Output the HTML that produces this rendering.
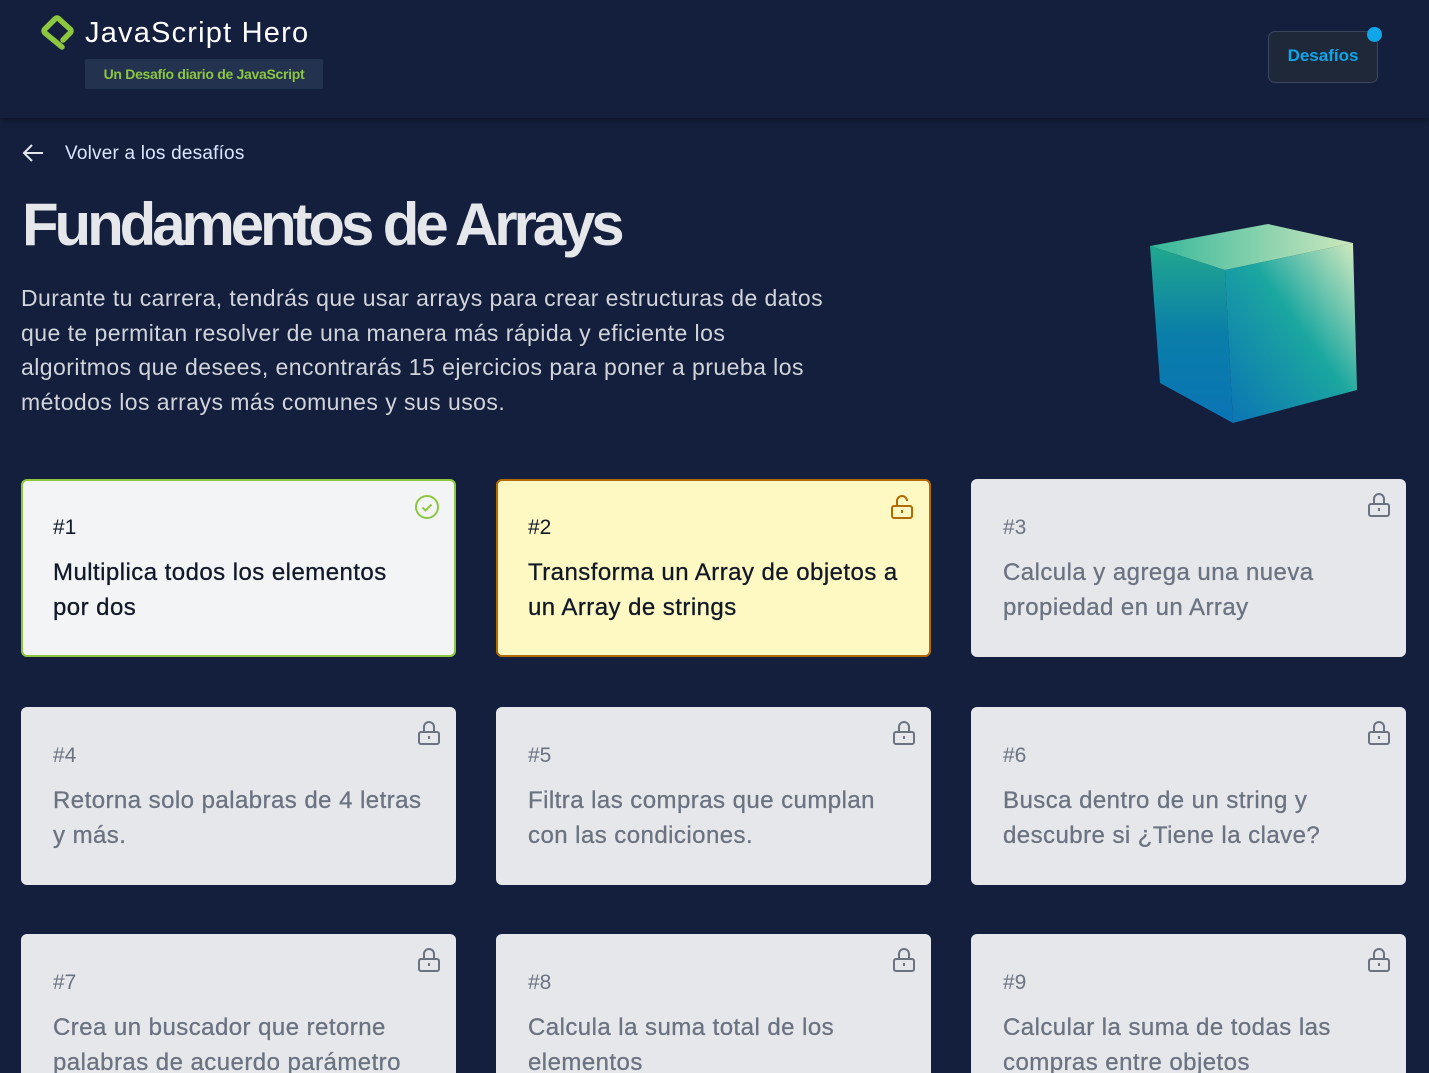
<!DOCTYPE html>
<html style="width:1429px;height:1073px;overflow:hidden"><head><meta charset="utf-8"><style>
*{box-sizing:border-box;margin:0;padding:0}
body{width:1429px;height:1073px;overflow:hidden;background:#131f3d;font-family:"Liberation Sans",sans-serif;position:relative}
.hdr{position:absolute;left:0;top:0;width:1429px;height:118px;background:#131f3c;box-shadow:0 2px 6px rgba(0,0,0,.35)}
.logo{position:absolute;left:85px;top:17px;color:#fff;font-size:29px;letter-spacing:1.2px}
.sub{position:absolute;left:85px;top:59px;width:238px;height:30px;background:#22324f;border-radius:2px;color:#8dc63f;font-weight:bold;font-size:14px;line-height:30px;text-align:center;letter-spacing:-.3px}
.btn{position:absolute;left:1268px;top:31px;width:110px;height:52px;border:1px solid #3b4660;border-radius:7px;background:#1e2838;color:#0ea5e9;font-weight:bold;font-size:17px;text-align:center;line-height:48px}
.dot{position:absolute;left:1367px;top:27px;width:15px;height:15px;border-radius:50%;background:#0ea5e9}
.back{position:absolute;left:65px;top:143px;color:#dbe6ff;font-size:19px;letter-spacing:.2px}
h1{position:absolute;left:22px;top:190px;color:#e5e7eb;font-size:60px;font-weight:bold;letter-spacing:-4.1px}
.desc{position:absolute;left:21px;top:281px;width:820px;color:#d1d5db;font-size:23px;line-height:34.5px;letter-spacing:.45px}
.card{position:absolute;width:435px;height:178px;border-radius:6px;background:#e5e7eb;color:#6b7280;padding:37px 32px 0 32px;overflow:hidden}
.card .n{font-size:21px}
.card .t{font-size:24px;line-height:34.5px;margin-top:16px;letter-spacing:.45px;-webkit-text-stroke:.3px currentColor}
.card svg{position:absolute;right:14px;top:13px}
.c1{background:#f3f4f6;border:2px solid #8dc63f;color:#111827;padding:35px 30px 0 30px}
.c2{background:#fef9c3;border:2px solid #b46a00;color:#111827;padding:35px 30px 0 30px}
</style></head><body>
<div class="hdr"></div>
<svg style="position:absolute;left:38px;top:14px" width="40" height="40" viewBox="0 0 40 40"><path d="M24 33 L7 19 Q5 17 7 15 L17 5 Q19 3 21 5 L32 15 Q34 17 32 19 L25 26" fill="none" stroke="#8dc63f" stroke-width="5.5" stroke-linecap="round" stroke-linejoin="round"/></svg>
<div class="logo">JavaScript Hero</div>
<div class="sub">Un Desafío diario de JavaScript</div>
<div class="btn">Desafíos</div>
<div class="dot"></div>
<svg style="position:absolute;left:22px;top:143px" width="22" height="20" viewBox="0 0 22 20"><path d="M21 10H2M10 2L2 10L10 18" fill="none" stroke="#e5e7eb" stroke-width="2"/></svg>
<div class="back">Volver a los desafíos</div>
<h1>Fundamentos de Arrays</h1>
<div class="desc">Durante tu carrera, tendrás que usar arrays para crear estructuras de datos que te permitan resolver de una manera más rápida y eficiente los algoritmos que desees, encontrarás 15 ejercicios para poner a prueba los métodos los arrays más comunes y sus usos.</div>
<svg style="position:absolute;left:1140px;top:215px" width="230" height="220" viewBox="1140 215 230 220">
<defs>
<linearGradient id="g1" x1="0" y1="0" x2="0" y2="1"><stop offset="0" stop-color="#21a88e"/><stop offset=".5" stop-color="#0a7ea9"/><stop offset="1" stop-color="#0a74b5"/></linearGradient>
<linearGradient id="g2" x1="1" y1="0" x2="0" y2="1"><stop offset="0" stop-color="#d6ecc0"/><stop offset=".45" stop-color="#1ba7a0"/><stop offset="1" stop-color="#0b72b4"/></linearGradient>
<linearGradient id="g3" x1="0" y1="0" x2="1" y2="0"><stop offset="0" stop-color="#35b79a"/><stop offset="1" stop-color="#cde8bd"/></linearGradient>
</defs>
<path d="M1150 246 L1268 224 L1353 243 L1225 270 Z" fill="url(#g3)"/>
<path d="M1150 246 L1225 270 L1233 423 L1160 383 Z" fill="url(#g1)"/>
<path d="M1225 270 L1353 243 L1357 390 L1233 423 Z" fill="url(#g2)"/>
</svg>

<div class="card c1" style="left:21px;top:479px"><div class="n">#1</div><div class="t">Multiplica todos los elementos por dos</div>
<svg width="26" height="26" viewBox="0 0 26 26"><circle cx="13" cy="13" r="11" fill="none" stroke="#8dc63f" stroke-width="2"/><path d="M8.5 13.5l3 3 6-6" fill="none" stroke="#8dc63f" stroke-width="2"/></svg></div>
<div class="card c2" style="left:496px;top:479px"><div class="n">#2</div><div class="t">Transforma un Array de objetos a un Array de strings</div>
<svg width="26" height="26" viewBox="0 0 26 26"><rect x="3" y="12" width="20" height="12" rx="2" fill="none" stroke="#b46a00" stroke-width="2"/><path d="M8 12V7a5 5 0 0 1 10 0" fill="none" stroke="#b46a00" stroke-width="2"/><path d="M13 16v3" stroke="#b46a00" stroke-width="2"/></svg></div>
<div class="card" style="left:971px;top:479px"><div class="n">#3</div><div class="t">Calcula y agrega una nueva propiedad en un Array</div><svg width="26" height="26" viewBox="0 0 26 26"><rect x="3" y="12" width="20" height="12" rx="2" fill="none" stroke="#6b7280" stroke-width="2"/><path d="M8 12V7a5 5 0 0 1 10 0V12" fill="none" stroke="#6b7280" stroke-width="2"/><path d="M13 16v3" stroke="#6b7280" stroke-width="2"/></svg></div>
<div class="card" style="left:21px;top:707px"><div class="n">#4</div><div class="t">Retorna solo palabras de 4 letras y más.</div><svg width="26" height="26" viewBox="0 0 26 26"><rect x="3" y="12" width="20" height="12" rx="2" fill="none" stroke="#6b7280" stroke-width="2"/><path d="M8 12V7a5 5 0 0 1 10 0V12" fill="none" stroke="#6b7280" stroke-width="2"/><path d="M13 16v3" stroke="#6b7280" stroke-width="2"/></svg></div>
<div class="card" style="left:496px;top:707px"><div class="n">#5</div><div class="t">Filtra las compras que cumplan con las condiciones.</div><svg width="26" height="26" viewBox="0 0 26 26"><rect x="3" y="12" width="20" height="12" rx="2" fill="none" stroke="#6b7280" stroke-width="2"/><path d="M8 12V7a5 5 0 0 1 10 0V12" fill="none" stroke="#6b7280" stroke-width="2"/><path d="M13 16v3" stroke="#6b7280" stroke-width="2"/></svg></div>
<div class="card" style="left:971px;top:707px"><div class="n">#6</div><div class="t">Busca dentro de un string y descubre si ¿Tiene la clave?</div><svg width="26" height="26" viewBox="0 0 26 26"><rect x="3" y="12" width="20" height="12" rx="2" fill="none" stroke="#6b7280" stroke-width="2"/><path d="M8 12V7a5 5 0 0 1 10 0V12" fill="none" stroke="#6b7280" stroke-width="2"/><path d="M13 16v3" stroke="#6b7280" stroke-width="2"/></svg></div>
<div class="card" style="left:21px;top:934px"><div class="n">#7</div><div class="t">Crea un buscador que retorne palabras de acuerdo parámetro</div><svg width="26" height="26" viewBox="0 0 26 26"><rect x="3" y="12" width="20" height="12" rx="2" fill="none" stroke="#6b7280" stroke-width="2"/><path d="M8 12V7a5 5 0 0 1 10 0V12" fill="none" stroke="#6b7280" stroke-width="2"/><path d="M13 16v3" stroke="#6b7280" stroke-width="2"/></svg></div>
<div class="card" style="left:496px;top:934px"><div class="n">#8</div><div class="t">Calcula la suma total de los elementos</div><svg width="26" height="26" viewBox="0 0 26 26"><rect x="3" y="12" width="20" height="12" rx="2" fill="none" stroke="#6b7280" stroke-width="2"/><path d="M8 12V7a5 5 0 0 1 10 0V12" fill="none" stroke="#6b7280" stroke-width="2"/><path d="M13 16v3" stroke="#6b7280" stroke-width="2"/></svg></div>
<div class="card" style="left:971px;top:934px"><div class="n">#9</div><div class="t">Calcular la suma de todas las compras entre objetos</div><svg width="26" height="26" viewBox="0 0 26 26"><rect x="3" y="12" width="20" height="12" rx="2" fill="none" stroke="#6b7280" stroke-width="2"/><path d="M8 12V7a5 5 0 0 1 10 0V12" fill="none" stroke="#6b7280" stroke-width="2"/><path d="M13 16v3" stroke="#6b7280" stroke-width="2"/></svg></div>
</body></html>
